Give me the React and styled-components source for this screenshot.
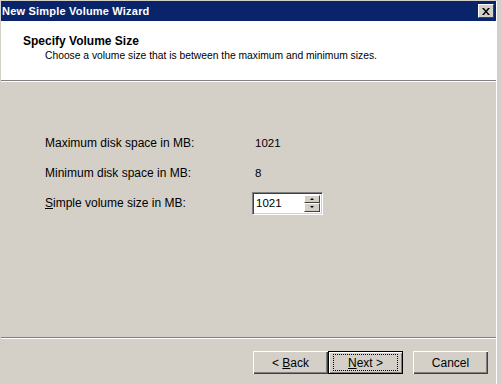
import React from 'react';
import styled, { createGlobalStyle } from 'styled-components';

const Global = createGlobalStyle`
    html, body {
        margin: 0;
        padding: 0;
        background: #d4d0c8;
    }
    body {
        font-family: "Liberation Sans", Arial, sans-serif;
        font-size: 11px;
        color: #000;
    }
`;

const Frame = styled.div`
    width: 501px;
    height: 384px;
    box-sizing: border-box;
    padding: 1px 4px 0 1px;
    background: #d4d0c8;
    overflow: hidden;
`;

const Window = styled.div`
    display: flex;
    flex-direction: column;
    height: 383px;
    border-right: 1px solid #ffffff;
`;

const TitleBar = styled.div`
    height: 20px;
    background: #0a246a;
    display: flex;
    align-items: center;
    justify-content: space-between;
    padding: 0 2px 0 1px;
`;

const TitleText = styled.span`
    color: #fff;
    font-weight: bold;
    font-size: 11px;
    letter-spacing: 0.2px;
`;

const CloseButton = styled.div`
    width: 16px;
    height: 14px;
    box-sizing: border-box;
    background: #d4d0c8;
    border-top: 1px solid #fff;
    border-left: 1px solid #fff;
    border-right: 1px solid #404040;
    border-bottom: 1px solid #404040;
    display: flex;
    align-items: center;
    justify-content: center;
`;

const Header = styled.div`
    height: 60px;
    background: #fff;
    border-bottom: 1px solid #808080;
    box-shadow: 0 1px 0 #fff;
    box-sizing: border-box;
    padding: 13px 0 0 22px;
`;

const HeaderTitle = styled.div`
    font-weight: bold;
    font-size: 12px;
    line-height: 14px;
`;

const HeaderSub = styled.div`
    margin: 1px 0 0 22px;
    line-height: 13px;
    font-size: 10.3px;
`;

const Body = styled.div`
    flex: 1;
    margin-top: 1px;
    padding: 46px 0 0 44px;
    display: grid;
    grid-template-columns: 207px 80px;
    grid-auto-rows: 30px;
    align-content: start;
    align-items: center;
`;

const Label = styled.span`
    font-size: 12px;
`;

const Value = styled.span`
    padding-left: 3px;
    font-size: 11.5px;
`;

const SpinBox = styled.div`
    width: 71px;
    height: 23px;
    box-sizing: border-box;
    display: flex;
    background: #fff;
    border-top: 1px solid #808080;
    border-left: 1px solid #808080;
    border-right: 1px solid #fff;
    border-bottom: 1px solid #fff;
    box-shadow: inset 1px 1px 0 #404040, inset -1px -1px 0 #d4d0c8;
    padding: 2px;
`;

const SpinInput = styled.div`
    flex: 1;
    display: flex;
    align-items: center;
    padding-left: 1px;
    font-size: 11.5px;
`;

const SpinArrows = styled.div`
    width: 16px;
    display: flex;
    flex-direction: column;
`;

const SpinArrow = styled.div`
    flex: 1;
    background: #d4d0c8;
    box-sizing: border-box;
    border-top: 1px solid #fff;
    border-left: 1px solid #fff;
    border-right: 1px solid #404040;
    border-bottom: 1px solid #404040;
    display: flex;
    align-items: center;
    justify-content: center;
    &::after {
        content: '';
        width: 0;
        height: 0;
        border-left: 2px solid transparent;
        border-right: 2px solid transparent;
        ${p => p.down ? 'border-top: 2px solid #000;' : 'border-bottom: 2px solid #000;'}
    }
`;

const Footer = styled.div`
    height: 47px;
    box-sizing: border-box;
    border-top: 1px solid #808080;
    box-shadow: inset 0 1px 0 #fff;
    padding: 13px 8px 0 0;
    display: flex;
    justify-content: flex-end;
`;

const Button = styled.button`
    width: 75px;
    height: 23px;
    margin-left: ${p => p.gap || 0}px;
    box-sizing: border-box;
    background: #d4d0c8;
    font-family: inherit;
    font-size: 12px;
    color: #000;
    padding: 0;
    border: none;
    box-shadow: ${p => p.primary
        ? 'inset 0 0 0 1px #000, inset 1px 1px 0 1px #fff, inset -1px -1px 0 1px #808080'
        : 'inset 1px 1px 0 #fff, inset -1px -1px 0 #404040, inset -2px -2px 0 #808080'};
    display: flex;
    align-items: center;
    justify-content: center;
`;

const FocusRing = styled.span`
    display: flex;
    align-items: center;
    justify-content: center;
    width: 63px;
    height: 15px;
    border: 1px dotted #000;
`;

const Caption = styled.span`
    white-space: pre;
`;

const Key = styled.u`
    text-decoration: underline;
`;

export default function App() {
    return (
        <>
            <Global />
            <Frame>
                <Window>
                    <TitleBar>
                        <TitleText>New Simple Volume Wizard</TitleText>
                        <CloseButton>
                            <svg width="8" height="7" viewBox="0 0 8 7">
                                <path d="M0 0h2l2 2.5L6 0h2L5 3.5 8 7H6L4 4.5 2 7H0l3-3.5z" fill="#000" />
                            </svg>
                        </CloseButton>
                    </TitleBar>
                    <Header>
                        <HeaderTitle>Specify Volume Size</HeaderTitle>
                        <HeaderSub>Choose a volume size that is between the maximum and minimum sizes.</HeaderSub>
                    </Header>
                    <Body>
                        <Label>Maximum disk space in MB:</Label>
                        <Value>1021</Value>
                        <Label>Minimum disk space in MB:</Label>
                        <Value>8</Value>
                        <Label><Key>S</Key>imple volume size in MB:</Label>
                        <SpinBox>
                            <SpinInput>1021</SpinInput>
                            <SpinArrows>
                                <SpinArrow />
                                <SpinArrow down />
                            </SpinArrows>
                        </SpinBox>
                    </Body>
                    <Footer>
                        <Button><Caption>{'< '}<Key>B</Key>ack</Caption></Button>
                        <Button primary>
                            <FocusRing><Caption><Key>N</Key>{'ext >'}</Caption></FocusRing>
                        </Button>
                        <Button gap={10}>Cancel</Button>
                    </Footer>
                </Window>
            </Frame>
        </>
    );
}
